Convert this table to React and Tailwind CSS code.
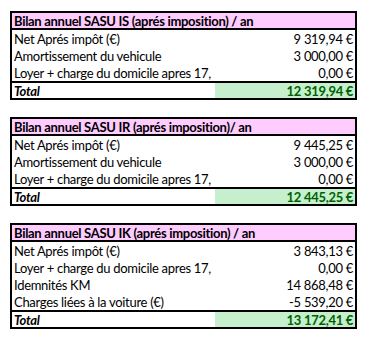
import React from "react";

const tables = [
  {
    title: "Bilan annuel SASU IS (aprés imposition) / an",
    rows: [
      ["Net Aprés impôt (€)", "9 319,94 €"],
      ["Amortissement du vehicule", "3 000,00 €"],
      ["Loyer + charge du domicile apres 17,", "0,00 €"],
    ],
    total: "12 319,94 €",
  },
  {
    title: "Bilan annuel SASU IR (aprés imposition)/ an",
    rows: [
      ["Net Aprés impôt (€)", "9 445,25 €"],
      ["Amortissement du vehicule", "3 000,00 €"],
      ["Loyer + charge du domicile apres 17,", "0,00 €"],
    ],
    total: "12 445,25 €",
  },
  {
    title: "Bilan annuel SASU IK (aprés imposition) / an",
    rows: [
      ["Net Aprés impôt (€)", "3 843,13 €"],
      ["Loyer + charge du domicile apres 17,", "0,00 €"],
      ["Idemnités KM", "14 868,48 €"],
      ["Charges liées à la voiture (€)", "-5 539,20 €"],
    ],
    total: "13 172,41 €",
  },
];

function Table({ t }) {
  return (
    <div className="w-[347px] border-2 border-black bg-white">
      <div className="h-[15px] box-content bg-[#ffccff] border-b-2 border-black px-[2px] font-bold leading-[16px] whitespace-nowrap overflow-hidden">
        {t.title}
      </div>
      {t.rows.map(([l, v], i) => (
        <div key={i} className="h-[17px] flex leading-[18px] whitespace-nowrap">
          <div className="w-[203px] px-[2px]">{l}</div>
          <div className="flex-1 px-[2px] text-right">{v}</div>
        </div>
      ))}
      <div className="h-[15px] box-content flex border-t-2 border-black leading-[16px] whitespace-nowrap">
        <div className="w-[203px] px-[2px] font-bold italic">Total</div>
        <div className="flex-1 px-[2px] text-right bg-[#c6efce] text-[#006100] font-bold">{t.total}</div>
      </div>
    </div>
  );
}

export default function App() {
  return (
    <div
      className="w-[378px] h-[345px] bg-white pl-[10px] pt-[11px] flex flex-col gap-[17px] text-[13px] tracking-[-0.3px] text-black"
      style={{ fontFamily: "Lato, 'Open Sans', sans-serif" }}
    >
      {tables.map((t, i) => (
        <Table key={i} t={t} />
      ))}
    </div>
  );
}
